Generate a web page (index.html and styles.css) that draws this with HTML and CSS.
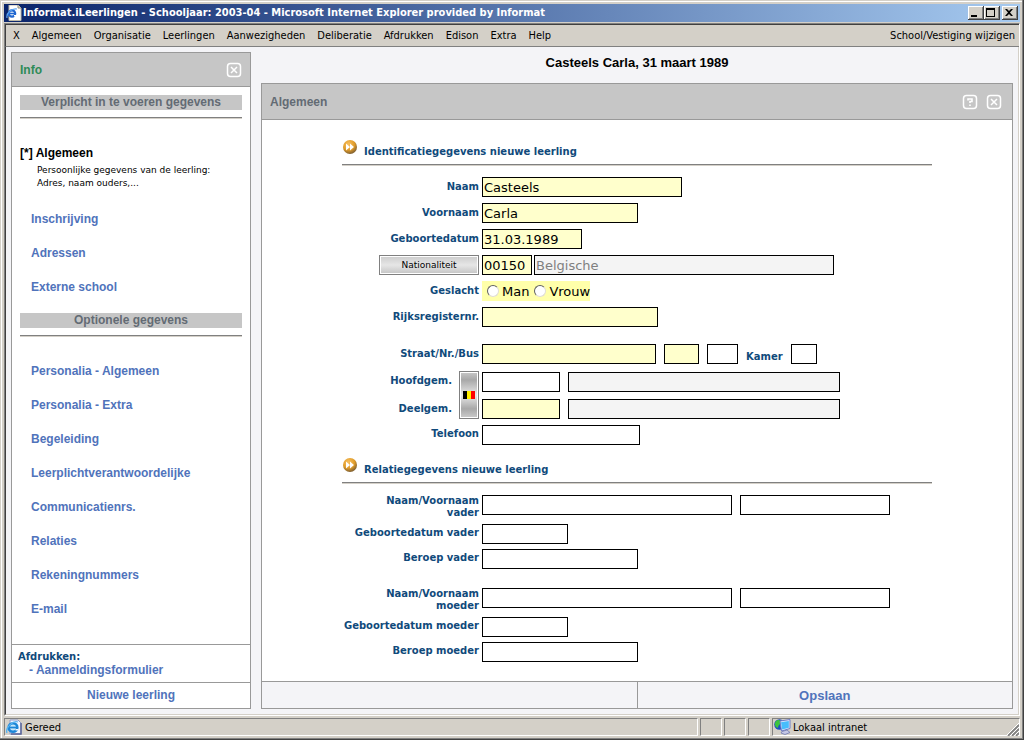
FILE: index.html
```html
<!DOCTYPE html>
<html lang="nl">
<head>
<meta charset="utf-8">
<title>Informat.iLeerlingen - Schooljaar: 2003-04</title>
<link rel="stylesheet" href="styles.css">
</head>
<body>
<div class="window">
  <header class="titlebar">
    <svg class="titlebar-icon" width="16" height="16" viewBox="0 0 16 16" aria-hidden="true">
      <path d="M3 0h9l3 3v12.500H3z" fill="#fff" stroke="#bdb9a8"/>
      <path d="M12 0v3h3" fill="#e4e0d0" stroke="#8d8a7c"/>
      <circle cx="6" cy="8.500" r="3.200" fill="none" stroke="#1f66d0" stroke-width="2.200"/>
      <path d="M4 8.500h6" stroke="#1f66d0" stroke-width="1.600"/>
      <path d="M8 10h3v1.500H8z" fill="#fff"/>
      <path d="M1 13C0 8 6 3 11 4" fill="none" stroke="#5aa2f0" stroke-width="1.200"/>
    </svg>
    <h1 class="titlebar-text">Informat.iLeerlingen - Schooljaar: 2003-04 - Microsoft Internet Explorer provided by Informat</h1>
    <div class="titlebar-buttons">
      <button class="win-button" type="button" aria-label="Minimaliseren"><svg width="12" height="10" viewBox="0 0 12 10"><path d="M2 7h6v2H2z"/></svg></button>
      <button class="win-button" type="button" aria-label="Maximaliseren"><svg width="12" height="10" viewBox="0 0 12 10"><path d="M1 0h9v9H1zM2 2v6h7V2z" fill-rule="evenodd"/></svg></button>
      <button class="win-button win-button-close" type="button" aria-label="Sluiten"><svg width="12" height="10" viewBox="0 0 12 10"><path d="M2 1h2l2 2 2-2h2L7 4.500 10 8H8L6 6 4 8H2l3-3.500z"/></svg></button>
    </div>
  </header>

  <div class="client">
    <nav class="menubar">
      <button class="menu" type="button">X</button>
      <button class="menu" type="button">Algemeen</button>
      <button class="menu" type="button">Organisatie</button>
      <button class="menu" type="button">Leerlingen</button>
      <button class="menu" type="button">Aanwezigheden</button>
      <button class="menu" type="button">Deliberatie</button>
      <button class="menu" type="button">Afdrukken</button>
      <button class="menu" type="button">Edison</button>
      <button class="menu" type="button">Extra</button>
      <button class="menu" type="button">Help</button>
      <button class="menu menu-right" type="button">School/Vestiging wijzigen</button>
    </nav>

    <div class="content">
      <aside class="sidebar">
        <div class="sidebar-head">
          <h2 class="sidebar-title">Info</h2>
          <button class="icon-button" type="button" aria-label="Info sluiten"><svg width="16" height="16" viewBox="0 0 16 16"><rect x="1.500" y="1.500" width="13" height="13" rx="3"/><path d="M5 5l6 6M11 5l-6 6"/></svg></button>
        </div>
        <div class="sidebar-body">
          <h3 class="group-title">Verplicht in te voeren gegevens</h3>
          <hr class="rule group-rule">
          <div class="current"><span>[*]</span><span>Algemeen</span></div>
          <p class="current-note">Persoonlijke gegevens van de leerling:<br>Adres, naam ouders,...</p>
          <ul class="links links-required">
            <li><a href="#">Inschrijving</a></li>
            <li><a href="#">Adressen</a></li>
            <li><a href="#">Externe school</a></li>
          </ul>
          <h3 class="group-title">Optionele gegevens</h3>
          <hr class="rule group-rule">
          <ul class="links links-optional">
            <li><a href="#">Personalia - Algemeen</a></li>
            <li><a href="#">Personalia - Extra</a></li>
            <li><a href="#">Begeleiding</a></li>
            <li><a href="#">Leerplichtverantwoordelijke</a></li>
            <li><a href="#">Communicatienrs.</a></li>
            <li><a href="#">Relaties</a></li>
            <li><a href="#">Rekeningnummers</a></li>
            <li><a href="#">E-mail</a></li>
          </ul>
        </div>
        <div class="print">
          <h3 class="print-title">Afdrukken:</h3>
          <a class="print-link" href="#">- Aanmeldingsformulier</a>
        </div>
        <a class="new-pupil" href="#">Nieuwe leerling</a>
      </aside>

      <main class="main">
        <h2 class="pupil">Casteels Carla, 31 maart 1989</h2>
        <section class="panel">
          <div class="panel-head">
            <h3 class="panel-title">Algemeen</h3>
            <button class="icon-button" type="button" aria-label="Help"><svg width="16" height="16" viewBox="0 0 16 16"><rect x="1.500" y="1.500" width="13" height="13" rx="3"/><path d="M6 6.500V5h4v2.500H8v1.500M8 10.500V12" stroke-width="1.600"/></svg></button>
            <button class="icon-button" type="button" aria-label="Sluiten"><svg width="16" height="16" viewBox="0 0 16 16"><rect x="1.500" y="1.500" width="13" height="13" rx="3"/><path d="M5 5l6 6M11 5l-6 6"/></svg></button>
          </div>

          <form class="form" id="pupil-form">
            <svg class="defs" width="0" height="0" aria-hidden="true">
              <defs>
                <radialGradient id="gold" cx="0.400" cy="0.300" r="0.700">
                  <stop offset="0" stop-color="#f8c060"/><stop offset="0.600" stop-color="#e09c2a"/><stop offset="1" stop-color="#806030"/>
                </radialGradient>
                <symbol id="arrows" viewBox="0 0 16 16">
                  <circle cx="8" cy="8" r="7" fill="url(#gold)"/>
                  <path d="M4 4.500L8 8l-4 3.500zM8 4.500L12 8l-4 3.500z" fill="#fff"/>
                </symbol>
              </defs>
            </svg>

            <h4 class="section-title"><svg width="16" height="16"><use href="#arrows"/></svg><span>Identificatiegegevens nieuwe leerling</span></h4>
            <hr class="rule">
            <div class="rows rows-identity">
              <div class="row"><label for="naam">Naam</label><input class="field required w200" id="naam" type="text" value="Casteels"></div>
              <div class="row"><label for="voornaam">Voornaam</label><input class="field required w156" id="voornaam" type="text" value="Carla"></div>
              <div class="row"><label for="geboorte">Geboortedatum</label><input class="field required w100" id="geboorte" type="text" value="31.03.1989"></div>
              <div class="row"><button class="lookup" type="button">Nationaliteit</button><div class="fields tight"><input class="field required w50" type="text" value="00150" aria-label="Nationaliteitscode"><input class="field readonly w300" type="text" value="Belgische" aria-label="Nationaliteit" readonly></div></div>
              <div class="row"><span class="row-label" id="geslacht">Geslacht</span>
                <div class="choice" role="radiogroup" aria-labelledby="geslacht">
                  <input class="radio" type="radio" name="geslacht" id="man"><label for="man">Man</label>
                  <input class="radio" type="radio" name="geslacht" id="vrouw"><label for="vrouw">Vrouw</label>
                </div>
              </div>
              <div class="row"><label for="rijks">Rijksregisternr.</label><input class="field required w176" id="rijks" type="text"></div>
            </div>

            <div class="rows rows-address">
              <div class="row"><label for="straat">Straat/Nr./Bus</label>
                <div class="fields"><input class="field required w174" id="straat" type="text"><input class="field required w35" type="text" aria-label="Nr."><input class="field w31" type="text" aria-label="Bus"><label class="room-label" for="kamer">Kamer</label><input class="field w26" id="kamer" type="text"></div>
              </div>
            </div>
            <div class="town">
              <div class="town-labels"><label for="hoofdgem">Hoofdgem.</label><label for="deelgem">Deelgem.</label></div>
              <button class="town-button" type="button" aria-label="Gemeente kiezen"><svg width="12" height="8" viewBox="0 0 12 8"><path d="M0 0h4v8H0z" fill="#000"/><path d="M4 0h4v8H4z" fill="#ffef00"/><path d="M8 0h4v8H8z" fill="#f00"/></svg></button>
              <div class="town-fields">
                <div class="fields"><input class="field w78" id="hoofdgem" type="text"><input class="field readonly w272" type="text" aria-label="Naam hoofdgemeente" readonly></div>
                <div class="fields"><input class="field required w78" id="deelgem" type="text"><input class="field readonly w272" type="text" aria-label="Naam deelgemeente" readonly></div>
              </div>
            </div>
            <div class="row row-phone"><label for="telefoon">Telefoon</label><input class="field w158" id="telefoon" type="text"></div>

            <h4 class="section-title section-title-next"><svg width="16" height="16"><use href="#arrows"/></svg><span>Relatiegegevens nieuwe leerling</span></h4>
            <hr class="rule">
            <div class="rows rows-parent">
              <div class="row row-name"><label for="vader">Naam/Voornaam vader</label><div class="fields"><input class="field w250" id="vader" type="text"><input class="field w150" type="text" aria-label="Voornaam vader"></div></div>
              <div class="row"><label for="geb-vader">Geboortedatum vader</label><input class="field w86" id="geb-vader" type="text"></div>
              <div class="row"><label for="beroep-vader">Beroep vader</label><input class="field w156" id="beroep-vader" type="text"></div>
            </div>
            <div class="rows rows-parent rows-mother">
              <div class="row row-name"><label for="moeder">Naam/Voornaam moeder</label><div class="fields"><input class="field w250" id="moeder" type="text"><input class="field w150" type="text" aria-label="Voornaam moeder"></div></div>
              <div class="row"><label for="geb-moeder">Geboortedatum moeder</label><input class="field w86" id="geb-moeder" type="text"></div>
              <div class="row"><label for="beroep-moeder">Beroep moeder</label><input class="field w156" id="beroep-moeder" type="text"></div>
            </div>
          </form>

          <div class="panel-foot">
            <div class="foot-cell"></div>
            <button class="foot-cell save" type="submit" form="pupil-form">Opslaan</button>
          </div>
        </section>
      </main>
    </div>
  </div>

  <footer class="statusbar">
    <div class="status status-main">
      <svg width="16" height="16" viewBox="0 0 16 16" aria-hidden="true">
        <path d="M4 1h8l3 3v11H4z" fill="#f2f5ff" stroke="#8c9ccc"/>
        <path d="M15 4v11H5" fill="none" stroke="#5a6496" stroke-width="1.500"/>
        <circle cx="7" cy="8.500" r="4.300" fill="#c8e8fa" stroke="#1c86d8" stroke-width="2.600"/>
        <path d="M3.500 8.500H12" stroke="#1c86d8" stroke-width="1.800"/>
        <path d="M9.500 10h3v1.500h-3z" fill="#f2f5ff"/>
        <path d="M1 14C-1 9 7 1 12 3" fill="none" stroke="#57b4f0" stroke-width="1.300"/>
      </svg>
      <span>Gereed</span>
    </div>
    <div class="status status-small"></div>
    <div class="status status-small"></div>
    <div class="status status-small"></div>
    <div class="status status-zone">
      <svg width="17" height="16" viewBox="0 0 17 16" aria-hidden="true">
        <circle cx="5.500" cy="5.500" r="5.300" fill="#1f4fc0"/>
        <path d="M2 2c2-2 5-1 5 1S4 6 4 9C1 8 0 5 2 2z" fill="#3cc43c"/>
        <path d="M6 2l10-1.500v9L7.500 12z" fill="#dfe8ff" stroke="#6f7fc8"/>
        <path d="M7 3.300l7.800-1.300v6.800L8.200 10.500z" fill="#48bdfc"/>
        <path d="M8 12.500l5-1.500 3 2.500-5 2-4-1.500z" fill="#c5c8e6" stroke="#7078b0" stroke-width="0.800"/>
      </svg>
      <span>Lokaal intranet</span>
      <svg class="grip" width="13" height="13" viewBox="0 0 13 13" aria-hidden="true">
        <path d="M2 13L13 2M6 13l7-7M10 13l3-3" stroke="#808080" stroke-width="1.800"/>
        <path d="M0 13L13 0M4 13l9-9M8 13l5-5" stroke="#fff"/>
      </svg>
    </div>
  </footer>
</div>
</body>
</html>
```
FILE: styles.css
```css
* { box-sizing: border-box; }

body {
  margin: 0;
  font-family: "Liberation Sans", Arial, sans-serif;
  font-size: 12px;
  color: #000;
}

h1, h2, h3, h4, p, ul { margin: 0; padding: 0; font-size: inherit; }
ul { list-style: none; }
button { margin: 0; padding: 0; border: 0; background: none; font: inherit; color: inherit; }
a { color: #5073bb; font-weight: bold; text-decoration: none; }
svg { display: block; flex: none; }

.window {
  display: flex;
  flex-direction: column;
  min-height: 100vh;
  padding: 4px 3px 3px 4px;
  border: 1px solid #404040;
  border-width: 0 1px 1px 0;
  background: #d4d0c8;
  box-shadow: inset -1px -1px #808080, inset 1px 1px #d4d0c8, inset 2px 2px #fff;
}

/* Title bar */
.titlebar {
  display: flex;
  align-items: center;
  height: 18px;
  padding: 0 2px;
  background: linear-gradient(to right, #0a246a, #a6caf0);
}
.titlebar-text {
  flex: 1;
  margin-left: 1px;
  font: bold 11px/18px "DejaVu Sans Condensed", "DejaVu Sans", sans-serif;
  color: #fff;
  white-space: nowrap;
}
.titlebar-buttons { display: flex; }
.win-button {
  width: 16px;
  height: 14px;
  padding: 1px;
  background: #d4d0c8;
  box-shadow: inset -1px -1px #404040, inset 1px 1px #fff, inset -2px -2px #808080;
}
.win-button-close { margin-left: 2px; }

/* Client area */
.client {
  flex: 1;
  display: flex;
  flex-direction: column;
  margin-top: 1px;
  border: 1px solid;
  border-color: #808080 #fff #fff #808080;
  background: #f4f4f7;
}
.menubar {
  display: flex;
  gap: 12px;
  height: 23px;
  padding: 0 4px 0 7px;
  border-top: 1px solid #404040;
  border-left: 1px solid #404040;
  border-bottom: 1px solid #808080;
  background: #d4d0c8;
  font: 11px/22px "DejaVu Sans Condensed", "DejaVu Sans", sans-serif;
}
.menu { white-space: nowrap; }
.menu-right { margin-left: auto; }
.content {
  flex: 1;
  display: flex;
  gap: 10px;
  padding: 5px;
  border-left: 1px solid #404040;
  border-right: 1px solid #d4d0c8;
  border-bottom: 1px solid #d4d0c8;
}

.rule {
  height: 2px;
  margin: 0;
  border: 0;
  border-top: 1px solid #808080;
  background: #d4d0c8;
}
.icon-button svg {
  fill: none;
  stroke: #fff;
  stroke-width: 1.5;
}

/* Sidebar */
.sidebar {
  display: flex;
  flex-direction: column;
  flex: none;
  width: 240px;
  border: 1px solid #999;
  background: #fff;
}
.sidebar-head {
  display: flex;
  align-items: center;
  justify-content: space-between;
  height: 34px;
  padding: 0 8px;
  border-bottom: 1px solid #999;
  background: #c6c6c6;
}
.sidebar-title { color: #2e8b57; }
.sidebar-body { flex: 1; padding: 8px; }
.group-title {
  background: #c6c6c6;
  color: #636b74;
  line-height: 15px;
  text-align: center;
}
.group-rule { margin-top: 7px; }
.current {
  display: flex;
  gap: 3px;
  margin-top: 26px;
  font-weight: bold;
  line-height: 16px;
}
.current-note {
  margin: 3px 0 0 17px;
  font: 9px/13px "DejaVu Sans", sans-serif;
  white-space: nowrap;
}
.links { padding-left: 11px; line-height: 34px; }
.links-required { margin: 12px 0 9px; }
.links-optional { margin-top: 17px; }
.print {
  height: 38px;
  padding: 6px 6px 0;
  border-top: 1px solid #999;
  line-height: 14px;
}
.print-title {
  color: #104a7b;
  font: bold 10px/12px "DejaVu Sans", sans-serif;
}
.print-link { margin-left: 11px; }
.new-pupil {
  border-top: 1px solid #999;
  line-height: 25px;
  text-align: center;
}

/* Main panel */
.main { flex: 1; display: flex; flex-direction: column; }
.pupil {
  height: 31px;
  font-size: 13px;
  line-height: 22px;
  text-align: center;
}
.panel {
  flex: 1;
  display: flex;
  flex-direction: column;
  border: 1px solid #999;
  background: #fff;
}
.panel-head {
  display: flex;
  align-items: center;
  gap: 8px;
  height: 36px;
  padding: 0 10px 0 8px;
  border-bottom: 1px solid #999;
  background: #c6c6c6;
}
.panel-title { flex: 1; color: #636b74; }
.panel-foot {
  display: flex;
  height: 27px;
  border-top: 1px solid #999;
  background: #f4f4f7;
}
.foot-cell { flex: 1; }
.save {
  border-left: 1px solid #999;
  color: #5073bb;
  font-size: 13px;
  font-weight: bold;
}

/* Form */
.form {
  flex: 1;
  width: 590px;
  margin: 0 auto;
  padding: 19px 0;
  color: #104a7b;
  font: bold 10px/12px "DejaVu Sans", sans-serif;
}
.defs { position: absolute; }
.section-title {
  display: flex;
  gap: 6px;
  height: 25px;
}
.section-title span { padding-top: 7px; }
.section-title-next { margin-top: 12px; }
.rows { display: grid; }
.rows-identity { gap: 6px; margin-top: 11px; }
.rows-address { margin-top: 17px; }
.rows-parent { gap: 5px; margin-top: 11px; }
.rows-mother { margin-top: 19px; }
.row {
  display: grid;
  grid-template-columns: 137px 1fr;
  column-gap: 3px;
  align-items: start;
  justify-items: start;
}
.row > label, .row-label {
  justify-self: end;
  padding-top: 4px;
  text-align: right;
}
.rows-parent label, .row-phone label { padding-top: 3px; }
.row-name > label {
  width: 110px;
  height: 24px;
  padding-top: 0;
}
.rows-parent .row-name label { padding-top: 0; }
.row-phone { margin-top: 6px; }
.fields { display: flex; align-items: center; gap: 8px; }
.fields.tight { gap: 2px; }
.room-label { padding-top: 5px; }
.field {
  height: 20px;
  padding: 0 1px;
  border: 1px solid #000;
  border-radius: 0;
  background: #fff;
  color: #000;
  font: 13px "DejaVu Sans", sans-serif;
}
.required { background: #ffc; }
.readonly { background: #f4f4f4; color: #808080; }
.w26 { width: 26px; }
.w31 { width: 31px; }
.w35 { width: 35px; }
.w50 { width: 50px; }
.w78 { width: 78px; }
.w86 { width: 86px; }
.w100 { width: 100px; }
.w150 { width: 150px; }
.w156 { width: 156px; }
.w158 { width: 158px; }
.w174 { width: 174px; }
.w176 { width: 176px; }
.w200 { width: 200px; }
.w250 { width: 250px; }
.w272 { width: 272px; }
.w300 { width: 300px; }

.lookup {
  justify-self: end;
  width: 100px;
  height: 20px;
  border: 1px solid #808080;
  background: linear-gradient(#ccc, #e6e6e6 50%, #c4c4c4);
  box-shadow: inset 0 0 0 1px #fff;
  color: #000;
  font: 9px "DejaVu Sans", sans-serif;
}
.choice {
  display: flex;
  align-items: center;
  height: 20px;
  padding-left: 5px;
  background: #ffa;
  color: #000;
  font: 13px/20px "DejaVu Sans", sans-serif;
}
.choice label { margin: 2px 5px 0 3px; }
.choice label:last-child { margin-right: 0; }
.radio {
  appearance: none;
  width: 12px;
  height: 12px;
  margin: 0;
  border: 1px solid;
  border-color: #606060 #e0ddd6 #e0ddd6 #606060;
  border-radius: 50%;
  background: #fff;
}
.radio:checked { background: radial-gradient(#000 2px, #fff 3px); }

.town { display: flex; margin-top: 7px; }
.town-labels {
  display: grid;
  gap: 16px;
  align-content: start;
  justify-items: end;
  width: 110px;
  padding-top: 4px;
}
.town-button {
  display: grid;
  place-items: center;
  width: 20px;
  height: 48px;
  margin: 0 3px 0 7px;
  border: 1px solid #808080;
  background: linear-gradient(#c8c8c8, #a8a8a8 17%, #e8e8e8 50%, #a8a8a8 80%, #ccc);
  box-shadow: inset 0 0 0 1px #fff;
}
.town-fields {
  display: grid;
  gap: 7px;
  align-content: start;
  padding-top: 1px;
}

/* Status bar */
.statusbar {
  display: flex;
  gap: 2px;
  margin-top: 2px;
  font: 11px/18px "DejaVu Sans Condensed", "DejaVu Sans", sans-serif;
}
.status {
  display: flex;
  height: 18px;
  border: 1px solid;
  border-color: #808080 #fff #fff #808080;
}
.status-main { flex: 1; gap: 3px; padding-left: 1px; }
.status-small { width: 22px; }
.status-zone { width: 248px; gap: 2px; padding-left: 1px; }
.grip { margin: 4px 0 0 auto; }
```
